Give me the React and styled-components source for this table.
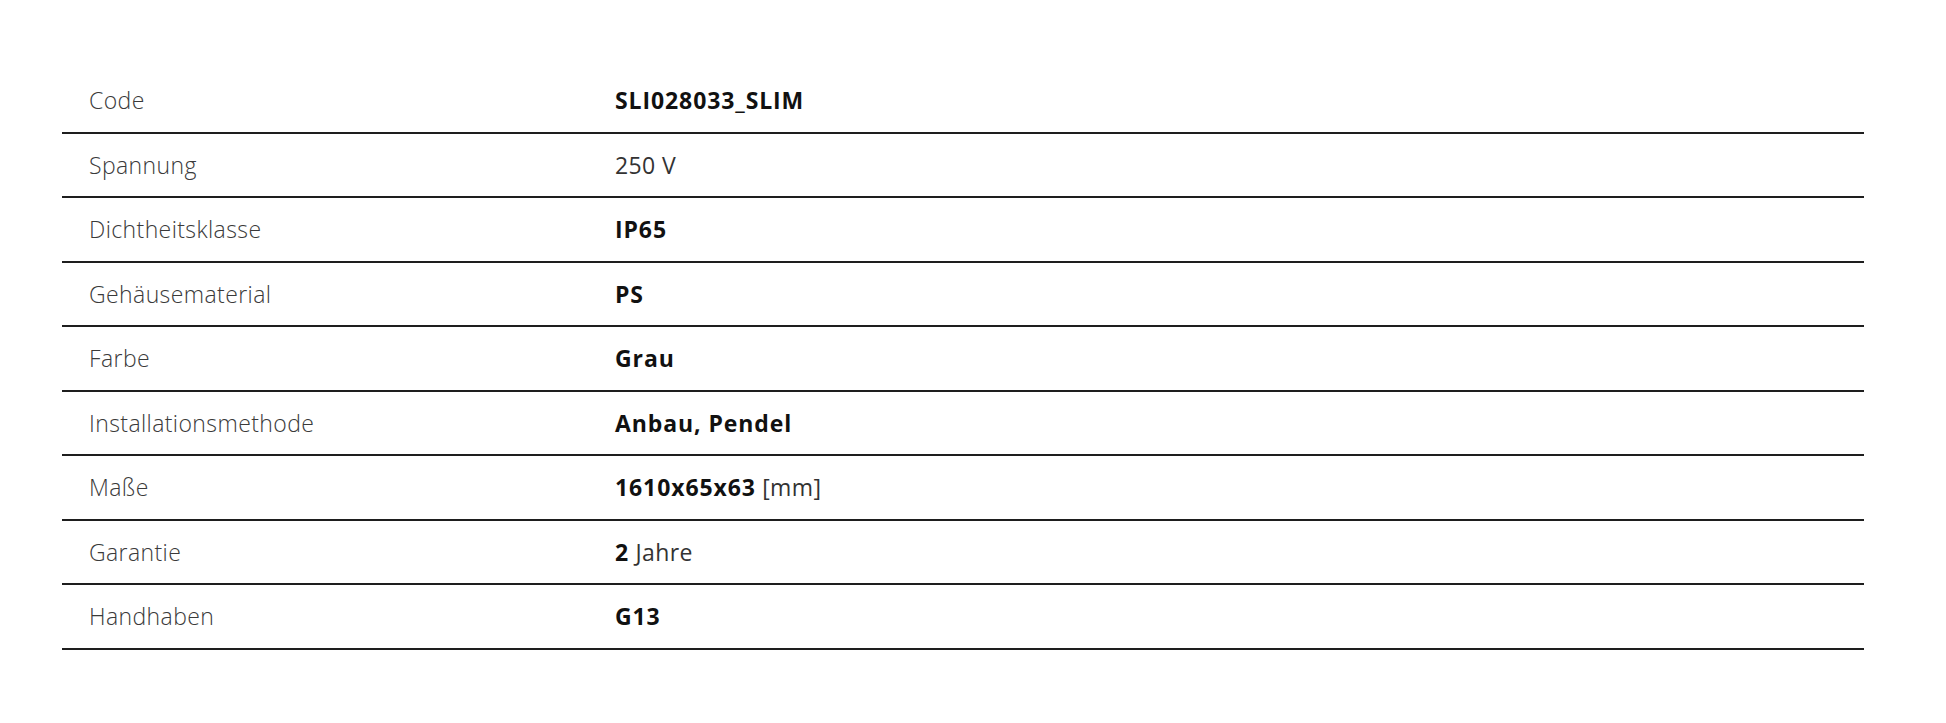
import React from 'react'
import styled, { createGlobalStyle } from 'styled-components'

const GlobalStyle = createGlobalStyle`
  html, body {
    margin: 0;
    padding: 0;
    background: #ffffff;
  }
  body {
    font-family: "Open Sans", Lato, sans-serif;
  }
`

const specs = [
  { label: 'Code', value: 'SLI028033_SLIM' },
  { label: 'Spannung', value: '250 V', plain: true },
  { label: 'Dichtheitsklasse', value: 'IP65' },
  { label: 'Gehäusematerial', value: 'PS' },
  { label: 'Farbe', value: 'Grau' },
  { label: 'Installationsmethode', value: 'Anbau, Pendel' },
  { label: 'Maße', value: '1610x65x63', unit: '[mm]' },
  { label: 'Garantie', value: '2', unit: 'Jahre' },
  { label: 'Handhaben', value: 'G13' },
]

const SpecRow = ({ spec }) => (
  <Row>
    <Label>{spec.label}</Label>
    <Value>
      {spec.plain ? (
        <Unit>{spec.value}</Unit>
      ) : (
        <strong>{spec.value}</strong>
      )}
      {spec.unit && <Unit> {spec.unit}</Unit>}
    </Value>
  </Row>
)

const App = () => (
  <Page>
    <GlobalStyle />
    <SpecTable>
      {specs.map((spec) => (
        <SpecRow key={spec.label} spec={spec} />
      ))}
    </SpecTable>
  </Page>
)

const Page = styled.div`
  padding: 69px 82px 72px 62px;
`

const SpecTable = styled.div`
  display: flex;
  flex-direction: column;
`

const Row = styled.div`
  display: grid;
  grid-template-columns: 526px 1fr;
  align-items: center;
  box-sizing: border-box;
  height: 64.5px;
  padding: 0 27px;
  border-bottom: 2px solid #1e1e1e;
`

const Label = styled.div`
  font-size: 23px;
  font-weight: 300;
  letter-spacing: 0.4px;
  color: #3a3a3a;
`

const Value = styled.div`
  font-size: 23px;
  color: #111;

  strong {
    font-weight: 700;
    letter-spacing: 0.9px;
  }
`

const Unit = styled.span`
  font-weight: 400;
  letter-spacing: 0.4px;
  color: #333;
`

export default App
